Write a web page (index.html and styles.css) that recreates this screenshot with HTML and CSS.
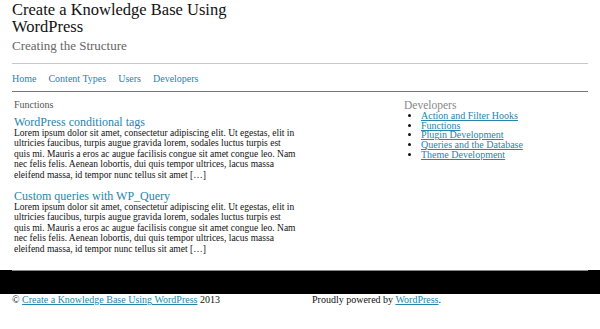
FILE: index.html
```html
<!doctype html>
<html lang="en">
  <head>
    <meta charset="UTF-8" />
    <title>Create a Knowledge Base Using WordPress</title>
    <link rel="stylesheet" href="styles.css">
  </head>
  <body>
    <header class="site-header">
      <h1 class="site-title">Create a Knowledge Base Using WordPress</h1>
      <h2 class="site-description">Creating the Structure</h2>
      <nav class="main-nav">
        <a href="#">Home</a>
        <a href="#">Content Types</a>
        <a href="#">Users</a>
        <a href="#">Developers</a>
      </nav>
    </header>

    <div class="site-main">
      <div class="content">
        <h3 class="archive-title">Functions</h3>

        <article class="post">
          <h2 class="entry-title"><a href="#">WordPress conditional tags</a></h2>
          <p>Lorem ipsum dolor sit amet, consectetur adipiscing elit. Ut egestas, elit in ultricies faucibus, turpis augue gravida lorem, sodales luctus turpis est quis mi. Mauris a eros ac augue facilisis congue sit amet congue leo. Nam nec felis felis. Aenean lobortis, dui quis tempor ultrices, lacus massa eleifend massa, id tempor nunc tellus sit amet [&hellip;]</p>
        </article>

        <article class="post">
          <h2 class="entry-title"><a href="#">Custom queries with WP_Query</a></h2>
          <p>Lorem ipsum dolor sit amet, consectetur adipiscing elit. Ut egestas, elit in ultricies faucibus, turpis augue gravida lorem, sodales luctus turpis est quis mi. Mauris a eros ac augue facilisis congue sit amet congue leo. Nam nec felis felis. Aenean lobortis, dui quis tempor ultrices, lacus massa eleifend massa, id tempor nunc tellus sit amet [&hellip;]</p>
        </article>
      </div>

      <aside class="sidebar">
        <h3 class="widget-title">Developers</h3>
        <ul class="widget-list">
          <li><a href="#">Action and Filter Hooks</a></li>
          <li><a href="#">Functions</a></li>
          <li><a href="#">Plugin Development</a></li>
          <li><a href="#">Queries and the Database</a></li>
          <li><a href="#">Theme Development</a></li>
        </ul>
      </aside>
    </div>

    <footer class="site-footer">
      <div class="footer-band">
        <div class="footer-rule"></div>
      </div>
      <div class="site-info">
        <span class="copyright">&copy; <a href="#">Create a Knowledge Base Using WordPress</a> 2013</span>
        <span class="credit">Proudly powered by <a href="#">WordPress</a>.</span>
      </div>
    </footer>
  </body>
</html>
```

FILE: styles.css
```css
* {
  margin: 0;
  padding: 0;
  box-sizing: border-box;
}

body {
  font-family: "Liberation Serif", "Times New Roman", serif;
  color: #111;
  background: #fff;
  width: 600px;
  height: 329px;
  overflow: hidden;
}

a {
  color: #2585ad;
}

.site-header {
  padding: 0 12px;
}

.site-title {
  font-size: 16.5px;
  font-weight: normal;
  line-height: 17px;
  width: 250px;
  color: #111;
  padding-top: 1px;
}

.site-description {
  font-size: 13px;
  font-weight: normal;
  color: #666;
  margin-top: 3px;
  padding-bottom: 9px;
  border-bottom: 1px solid #c8c8c8;
}

.main-nav {
  display: flex;
  gap: 12px;
  padding: 9px 0 7px;
  border-bottom: 1px solid #777;
  font-size: 10px;
}

.main-nav a {
  text-decoration: none;
}

.site-main {
  display: flex;
  padding: 7px 14px 0;
  height: 178px;
}

.content {
  width: 282px;
}

.archive-title {
  font-size: 10px;
  font-weight: normal;
  color: #555;
  margin-bottom: 7px;
}

.post {
  margin-bottom: 11px;
}

.entry-title {
  font-size: 12px;
  font-weight: normal;
  line-height: 11px;
}

.entry-title a {
  text-decoration: none;
}

.post p {
  font-size: 9.5px;
  line-height: 10.4px;
}

.sidebar {
  margin-left: 108px;
}

.widget-title {
  font-size: 11.5px;
  font-weight: normal;
  color: #888;
  line-height: 12px;
}

.widget-list {
  list-style: disc;
  padding-left: 17px;
  font-size: 10px;
  line-height: 9.7px;
}

.footer-band {
  background: #000;
  height: 24px;
  padding: 0 12px;
}

.footer-rule {
  border-top: 1px solid #888;
}

.site-info {
  display: flex;
  padding: 0 12px;
  font-size: 10px;
  line-height: 12px;
}

.copyright {
  width: 300px;
}
```
